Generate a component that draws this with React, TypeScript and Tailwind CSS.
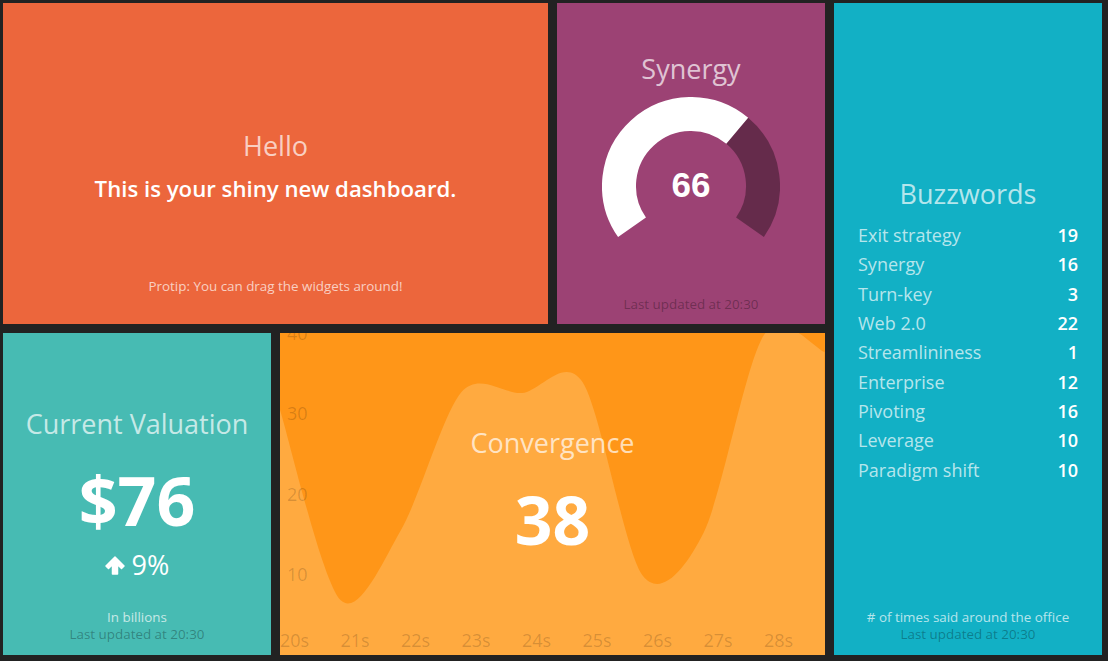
import React from "react";

const pts: [number, number][] = [
  [0, 77],
  [60.5, 267],
  [121, 197],
  [181.5, 59],
  [242, 60],
  [302.5, 49],
  [363, 243],
  [423.5, 200],
  [484, 2],
  [544.5, 19],
];

// cardinal spline through the data points, like the original graph
const curve = (p: [number, number][], a = 0.15) => {
  let d = `M${p[0][0]},${p[0][1]}`;
  for (let i = 0; i < p.length - 1; i++) {
    const p0 = p[Math.max(i - 1, 0)];
    const p1 = p[i];
    const p2 = p[i + 1];
    const p3 = p[Math.min(i + 2, p.length - 1)];
    const c1x = p1[0] + a * (p2[0] - p0[0]);
    const c1y = p1[1] + a * (p2[1] - p0[1]);
    const c2x = p2[0] - a * (p3[0] - p1[0]);
    const c2y = p2[1] - a * (p3[1] - p1[1]);
    d += ` C${c1x},${c1y} ${c2x},${c2y} ${p2[0]},${p2[1]}`;
  }
  return d;
};

const areaPath = curve(pts) + " L545,322 L0,322 Z";

const buzzwords = [
  { label: "Exit strategy", value: 19 },
  { label: "Synergy", value: 16 },
  { label: "Turn-key", value: 3 },
  { label: "Web 2.0", value: 22 },
  { label: "Streamlininess", value: 1 },
  { label: "Enterprise", value: 12 },
  { label: "Pivoting", value: 16 },
  { label: "Leverage", value: 10 },
  { label: "Paradigm shift", value: 10 },
];

const Title = ({ children }: { children: React.ReactNode }) => (
  <h1 className="text-[27px] leading-[36px] font-normal text-white/70">{children}</h1>
);

const Updated = ({ bottom = "bottom-[12px]" }: { bottom?: string }) => (
  <p className={`absolute left-0 right-0 ${bottom} text-[13.4px] leading-[18px] text-black/30`}>
    Last updated at 20:30
  </p>
);

const MoreInfo = ({ children }: { children: React.ReactNode }) => (
  <p className="absolute left-0 right-0 bottom-[29px] text-[13.4px] leading-[18px] text-white/70">
    {children}
  </p>
);

const Gauge = () => {
  const p = (deg: number) => {
    const r = (deg * Math.PI) / 180;
    return `${89 + 72 * Math.sin(r)},${89 - 72 * Math.cos(r)}`;
  };
  return (
    <div className="relative w-[178px] h-[178px]">
      <svg width="178" height="178" viewBox="0 0 178 178">
        <path d={`M${p(-125)} A72,72 0 0 1 ${p(40)}`} fill="none" stroke="#ffffff" strokeWidth="34" />
        <path d={`M${p(40)} A72,72 0 0 1 ${p(125)}`} fill="none" stroke="rgba(0,0,0,0.35)" strokeWidth="34" />
      </svg>
      <span className="absolute inset-0 flex items-center justify-center font-['Liberation_Sans',Arial,sans-serif] font-bold text-[35px] text-white">
        66
      </span>
    </div>
  );
};

const ArrowUpIcon = () => (
  <svg width="20" height="19" viewBox="0 0 20 19" className="mt-[2px]">
    <path
      d="M10,1 L19,10 L16.5,12.5 L12.5,8.5 L12.5,18 L7.5,18 L7.5,8.5 L3.5,12.5 L1,10 Z"
      fill="#ffffff"
      stroke="#ffffff"
      strokeWidth="1.5"
      strokeLinejoin="round"
    />
  </svg>
);

export default function App() {
  return (
    <div className="min-h-screen w-full bg-[#222222] pt-[3px] pl-[3px] font-['Open_Sans',sans-serif]">
      <div className="grid grid-cols-[268px_268px_268px_268px] grid-rows-[321px_322px] gap-[9px]">
        {/* Hello */}
        <div className="relative col-span-2 bg-[#ec663c] flex flex-col items-center justify-center text-center pt-[4px]">
          <Title>Hello</Title>
          <h3 className="mt-[10px] text-[22.2px] leading-[30px] font-semibold text-white">
            This is your shiny new dashboard.
          </h3>
          <MoreInfo>Protip: You can drag the widgets around!</MoreInfo>
        </div>

        {/* Synergy */}
        <div className="relative bg-[#9c4274] flex flex-col items-center justify-center text-center pb-[2px]">
          <Title>Synergy</Title>
          <div className="mt-[10px]">
            <Gauge />
          </div>
          <Updated bottom="bottom-[11px]" />
        </div>

        {/* Buzzwords */}
        <div className="relative row-span-2 bg-[#12b0c5] flex flex-col items-center justify-center text-center px-[11px] pt-[5px]">
          <Title>Buzzwords</Title>
          <ul className="mt-[11px] w-full px-[13px] text-left">
            {buzzwords.map((b) => (
              <li key={b.label} className="flex justify-between text-[18px] leading-[24.5px] mb-[4.9px]">
                <span className="text-white/70">{b.label}</span>
                <span className="font-semibold text-white">{b.value}</span>
              </li>
            ))}
          </ul>
          <MoreInfo># of times said around the office</MoreInfo>
          <Updated />
        </div>

        {/* Current Valuation */}
        <div className="relative bg-[#47bbb3] flex flex-col items-center justify-center text-center">
          <Title>Current Valuation</Title>
          <h2 className="mt-[11px] text-[68px] leading-[94px] font-bold text-white">$76</h2>
          <p className="flex items-center justify-center gap-[7px] text-[27px] leading-[36px] font-medium text-white">
            <ArrowUpIcon />
            <span>9%</span>
          </p>
          <MoreInfo>In billions</MoreInfo>
          <Updated />
        </div>

        {/* Convergence */}
        <div className="relative col-span-2 bg-[#ff9618] overflow-hidden flex flex-col items-center justify-center text-center">
          <svg
            className="absolute inset-0"
            width="545"
            height="322"
            viewBox="0 0 545 322"
          >
            <path d={areaPath} fill="#ffaa40" />
            {[
              { v: "40", y: 0 },
              { v: "30", y: 80.5 },
              { v: "20", y: 161 },
              { v: "10", y: 241.5 },
            ].map((t) => (
              <text
                key={t.v}
                x="7"
                y={t.y + 6.5}
                fontSize="18"
                fill="rgba(0,0,0,0.16)"
                fontFamily="'Open Sans', sans-serif"
              >
                {t.v}
              </text>
            ))}
            {["20s", "21s", "22s", "23s", "24s", "25s", "26s", "27s", "28s"].map((s, i) => (
              <text
                key={s}
                x={i * 60.5}
                y="313.5"
                fontSize="18"
                fill="rgba(0,0,0,0.17)"
                fontFamily="'Open Sans', sans-serif"
              >
                {s}
              </text>
            ))}
          </svg>
          <div className="relative z-10 flex flex-col items-center pt-[2px]">
            <Title>Convergence</Title>
            <h2 className="mt-[11px] text-[66px] leading-[94px] font-bold text-white">38</h2>
          </div>
        </div>
      </div>
    </div>
  );
}
